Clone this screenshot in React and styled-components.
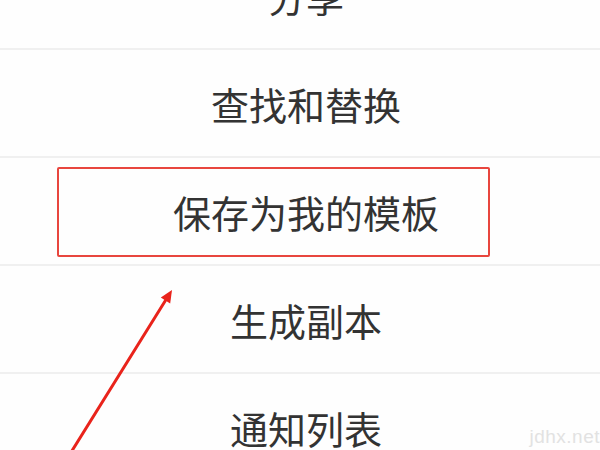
import React from 'react';
import styled, { createGlobalStyle } from 'styled-components';

const items = ['分享', '查找和替换', '保存为我的模板', '生成副本', '通知列表'];
const highlighted = '保存为我的模板';

const App = () => {
  return (
    <>
      <GlobalStyle />
      <Screen>
        <MenuList>
          {items.map((label) => (
            <MenuItem key={label}>
              {label === highlighted && <Highlight />}
              <Label>{label}</Label>
            </MenuItem>
          ))}
        </MenuList>

        <Arrow width="600" height="450" viewBox="0 0 600 450">
          <line x1="70" y1="454" x2="167" y2="298" stroke="#e9231b" strokeWidth="3" strokeLinecap="round" />
          <polygon points="172,290 170.2,303.4 160.8,297.4" fill="#e9231b" />
        </Arrow>

        <Watermark>jdhx.net</Watermark>
      </Screen>
    </>
  );
};

const GlobalStyle = createGlobalStyle`
  html, body {
    margin: 0;
    padding: 0;
    background: #ffffff;
    overflow: hidden;
  }
`;

const Screen = styled.div`
  position: relative;
  width: 600px;
  height: 450px;
  overflow: hidden;
  background: #fefefe;
`;

const MenuList = styled.ul`
  list-style: none;
  margin: -58px 0 0;
  padding: 0;
`;

const MenuItem = styled.li`
  position: relative;
  box-sizing: border-box;
  height: 108px;
  display: flex;
  align-items: center;
  justify-content: center;
  padding-left: 12px;
  border-bottom: 2px solid #f0f0f0;
`;

const Label = styled.span`
  font-family: "Noto Sans CJK SC", "Noto Sans", sans-serif;
  font-size: 38px;
  color: #333333;
  letter-spacing: 0;
`;

const Highlight = styled.div`
  position: absolute;
  left: 57px;
  top: 9px;
  width: 433px;
  height: 90px;
  box-sizing: border-box;
  border: 2px solid #e8463e;
  border-radius: 2px;
`;

const Arrow = styled.svg`
  position: absolute;
  left: 0;
  top: 0;
  pointer-events: none;
`;

const Watermark = styled.div`
  position: absolute;
  right: 0;
  bottom: 2px;
  font-family: "Liberation Sans", Arial, sans-serif;
  font-size: 19px;
  color: #e2e2e2;
  letter-spacing: 0.5px;
`;

export default App;
